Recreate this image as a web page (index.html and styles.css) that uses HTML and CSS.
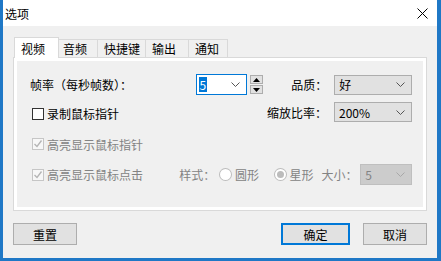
FILE: index.html
```html
<!DOCTYPE html>
<html lang="zh-CN">
<head>
<meta charset="UTF-8">
<title>选项</title>
<link rel="stylesheet" href="styles.css">
</head>
<body>

<div class="window">
    <div class="titlebar">
        <span class="title">选项</span>
        <svg class="close" width="11" height="11" viewBox="0 0 11 11">
            <path d="M0.5 0.5 L10.5 10.5 M10.5 0.5 L0.5 10.5" stroke="#000" stroke-width="1" fill="none"/>
        </svg>
    </div>

    <div class="content">
        <div class="tabs">
            <div class="tab active">视频</div>
            <div class="tab first">音频</div>
            <div class="tab w48">快捷键</div>
            <div class="tab w43">输出</div>
            <div class="tab">通知</div>
        </div>

        <div class="panel">
            <div class="pane">
                <!-- frame rate / quality -->
                <div class="row row1">
                    <div class="label fps">帧率（每秒帧数）：</div>
                    <div class="combo focused">
                        <span class="sel">5</span>
                        <svg class="chev" width="9" height="5" viewBox="0 0 9 5"><path d="M0.5 0.5 L4.5 4.5 L8.5 0.5" stroke="#555" fill="none"/></svg>
                    </div>
                    <div class="spin">
                        <div class="spin-btn"><svg width="7" height="4" viewBox="0 0 7 4"><path d="M0 4 L3.5 0 L7 4 Z" fill="#000"/></svg></div>
                        <div class="spin-btn"><svg width="7" height="4" viewBox="0 0 7 4"><path d="M0 0 L3.5 4 L7 0 Z" fill="#000"/></svg></div>
                    </div>
                    <div class="label right">品质：</div>
                    <div class="combo wide">
                        <span>好</span>
                        <svg class="chev" width="9" height="5" viewBox="0 0 9 5"><path d="M0.5 0.5 L4.5 4.5 L8.5 0.5" stroke="#555" fill="none"/></svg>
                    </div>
                </div>

                <!-- record cursor / zoom -->
                <div class="row row2">
                    <label class="check">
                        <span class="box"></span>
                        <span>录制鼠标指针</span>
                    </label>
                    <div class="label right push">缩放比率：</div>
                    <div class="combo wide">
                        <span>200%</span>
                        <svg class="chev" width="9" height="5" viewBox="0 0 9 5"><path d="M0.5 0.5 L4.5 4.5 L8.5 0.5" stroke="#555" fill="none"/></svg>
                    </div>
                </div>

                <div class="row row3">
                    <label class="check disabled">
                        <span class="box"><svg width="10" height="10" viewBox="0 0 10 10"><path d="M1.5 5 L4 7.5 L8.5 1.5" stroke="#b4b4b4" stroke-width="1.3" fill="none"/></svg></span>
                        <span>高亮显示鼠标指针</span>
                    </label>
                </div>

                <div class="row row4">
                    <label class="check disabled click">
                        <span class="box"><svg width="10" height="10" viewBox="0 0 10 10"><path d="M1.5 5 L4 7.5 L8.5 1.5" stroke="#b4b4b4" stroke-width="1.3" fill="none"/></svg></span>
                        <span>高亮显示鼠标点击</span>
                    </label>
                    <div class="label dim style">样式：</div>
                    <span class="radio"></span>
                    <span class="label dim r1">圆形</span>
                    <span class="radio on"></span>
                    <span class="label dim r2">星形</span>
                    <div class="label dim size">大小：</div>
                    <div class="combo off">
                        <span>5</span>
                        <svg class="chev" width="9" height="5" viewBox="0 0 9 5"><path d="M0.5 0.5 L4.5 4.5 L8.5 0.5" stroke="#a8a8a8" fill="none"/></svg>
                    </div>
                </div>
            </div>
        </div>

        <div class="buttons">
            <button class="btn">重置</button>
            <button class="btn default">确定</button>
            <button class="btn">取消</button>
        </div>
    </div>
</div>

</body>
</html>
```

FILE: styles.css
```css
body {
    margin: 0;
    background-color: #1f78c6;
    font-family: "Noto Sans CJK SC", "Noto Sans", sans-serif;
    font-size: 12px;
    color: #000;
}

.window {
    margin-left: 3px;
    width: 434px;
    height: 258px;
    background-color: #f0f0f0;
    display: flex;
    flex-direction: column;
}

.titlebar {
    height: 26px;
    background-color: #fff;
    display: flex;
    align-items: center;
    justify-content: space-between;
    padding: 0 9px 0 2px;
}

.title {
    line-height: 1;
    margin-top: 1px;
}

.content {
    padding: 11px 10px 0 10px;
}

/* Tabs */
.tabs {
    display: flex;
    align-items: flex-end;
    height: 20px;
    padding-left: 1px;
}

.tab {
    box-sizing: border-box;
    height: 18px;
    width: 39px;
    padding-left: 6px;
    line-height: 17px;
    background-color: #f0f0f0;
    border-top: 1px solid #d9d9d9;
    border-right: 1px solid #d9d9d9;
}

.tab.first {
    padding-left: 4px;
}

.tab.w48 {
    width: 48px;
}

.tab.w43 {
    width: 43px;
}

.tab.active {
    position: relative;
    z-index: 1;
    width: 45px;
    height: 21px;
    margin-bottom: -1px;
    padding-left: 6px;
    line-height: 21px;
    background-color: #fff;
    border-left: 1px solid #d9d9d9;
}

/* Panel */
.panel {
    box-sizing: border-box;
    height: 154px;
    padding: 3px;
    background-color: #fff;
    border: 1px solid #d9d9d9;
}

.pane {
    height: 100%;
    background-color: #f0f0f0;
    padding-right: 11px;
    box-sizing: border-box;
}

.row {
    display: flex;
    align-items: center;
}

.row1 {
    height: 21px;
    padding-top: 13px;
}

.row2 {
    height: 20px;
    margin-top: 7px;
}

.row3 {
    height: 20px;
    margin-top: 12px;
}

.row4 {
    height: 21px;
    margin-top: 10px;
}

.label {
    white-space: nowrap;
}

.label.fps {
    margin-left: 13px;
    width: 166px;
}

.label.right {
    box-sizing: border-box;
    width: 71px;
    padding-right: 7px;
    text-align: right;
}

.label.push {
    margin-left: auto;
    width: 88px;
}

.dim {
    color: #838383;
}

.label.style {
    width: 40px;
}

.label.r1 {
    margin-left: 3px;
    width: 39px;
}

.label.r2 {
    margin-left: 3px;
    width: 32px;
}

.label.size {
    width: 39px;
}

/* Combo boxes */
.combo {
    box-sizing: border-box;
    width: 52px;
    height: 21px;
    display: flex;
    align-items: center;
    justify-content: space-between;
    padding: 0 6px 0 4px;
    background-color: #e1e1e1;
    border: 1px solid #adadad;
}

.combo.wide {
    width: 78px;
    height: 20px;
}

.combo.focused {
    background-color: #fff;
    border-color: #0078d7;
    padding-left: 2px;
}

.combo.off {
    background-color: #cccccc;
    border-color: #bfbfbf;
    color: #838383;
}

.sel {
    background-color: #0078d7;
    color: #fff;
    padding: 0 1px;
    line-height: 15px;
}

.chev {
    display: block;
}

.spin {
    margin-left: 3px;
    width: 13px;
    display: flex;
    flex-direction: column;
    gap: 1px;
}

.spin-btn {
    box-sizing: border-box;
    height: 9px;
    display: flex;
    align-items: center;
    justify-content: center;
    background-color: #e1e1e1;
    border: 1px solid #adadad;
}

/* Checkboxes and radios */
.check {
    display: flex;
    align-items: center;
    gap: 3px;
    margin-left: 15px;
}

.row2 .check {
    align-self: flex-end;
    margin-bottom: 0;
}

.check.click {
    width: 148px;
}

.box {
    box-sizing: border-box;
    width: 12px;
    height: 12px;
    border: 1px solid #333;
    background-color: #fff;
    display: flex;
    align-items: center;
    justify-content: center;
}

.check.disabled {
    color: #838383;
}

.check.disabled .box {
    border-color: #c6c6c6;
    background-color: #f7f7f7;
}

.radio {
    box-sizing: border-box;
    width: 13px;
    height: 13px;
    border-radius: 50%;
    border: 1px solid #bcbcbc;
    background-color: #fff;
    position: relative;
}

.radio.on::after {
    content: '';
    position: absolute;
    left: 2px;
    top: 2px;
    width: 7px;
    height: 7px;
    border-radius: 50%;
    background-color: #bcbcbc;
}

/* Bottom buttons */
.buttons {
    display: flex;
    margin-top: 12px;
}

.btn {
    box-sizing: border-box;
    width: 64px;
    height: 22px;
    padding: 0;
    font-family: inherit;
    font-size: 12px;
    color: #000;
    background-color: #e1e1e1;
    border: 1px solid #adadad;
}

.btn.default {
    width: 69px;
    margin-left: auto;
    margin-right: 13px;
    border: 2px solid #0078d7;
}
```
